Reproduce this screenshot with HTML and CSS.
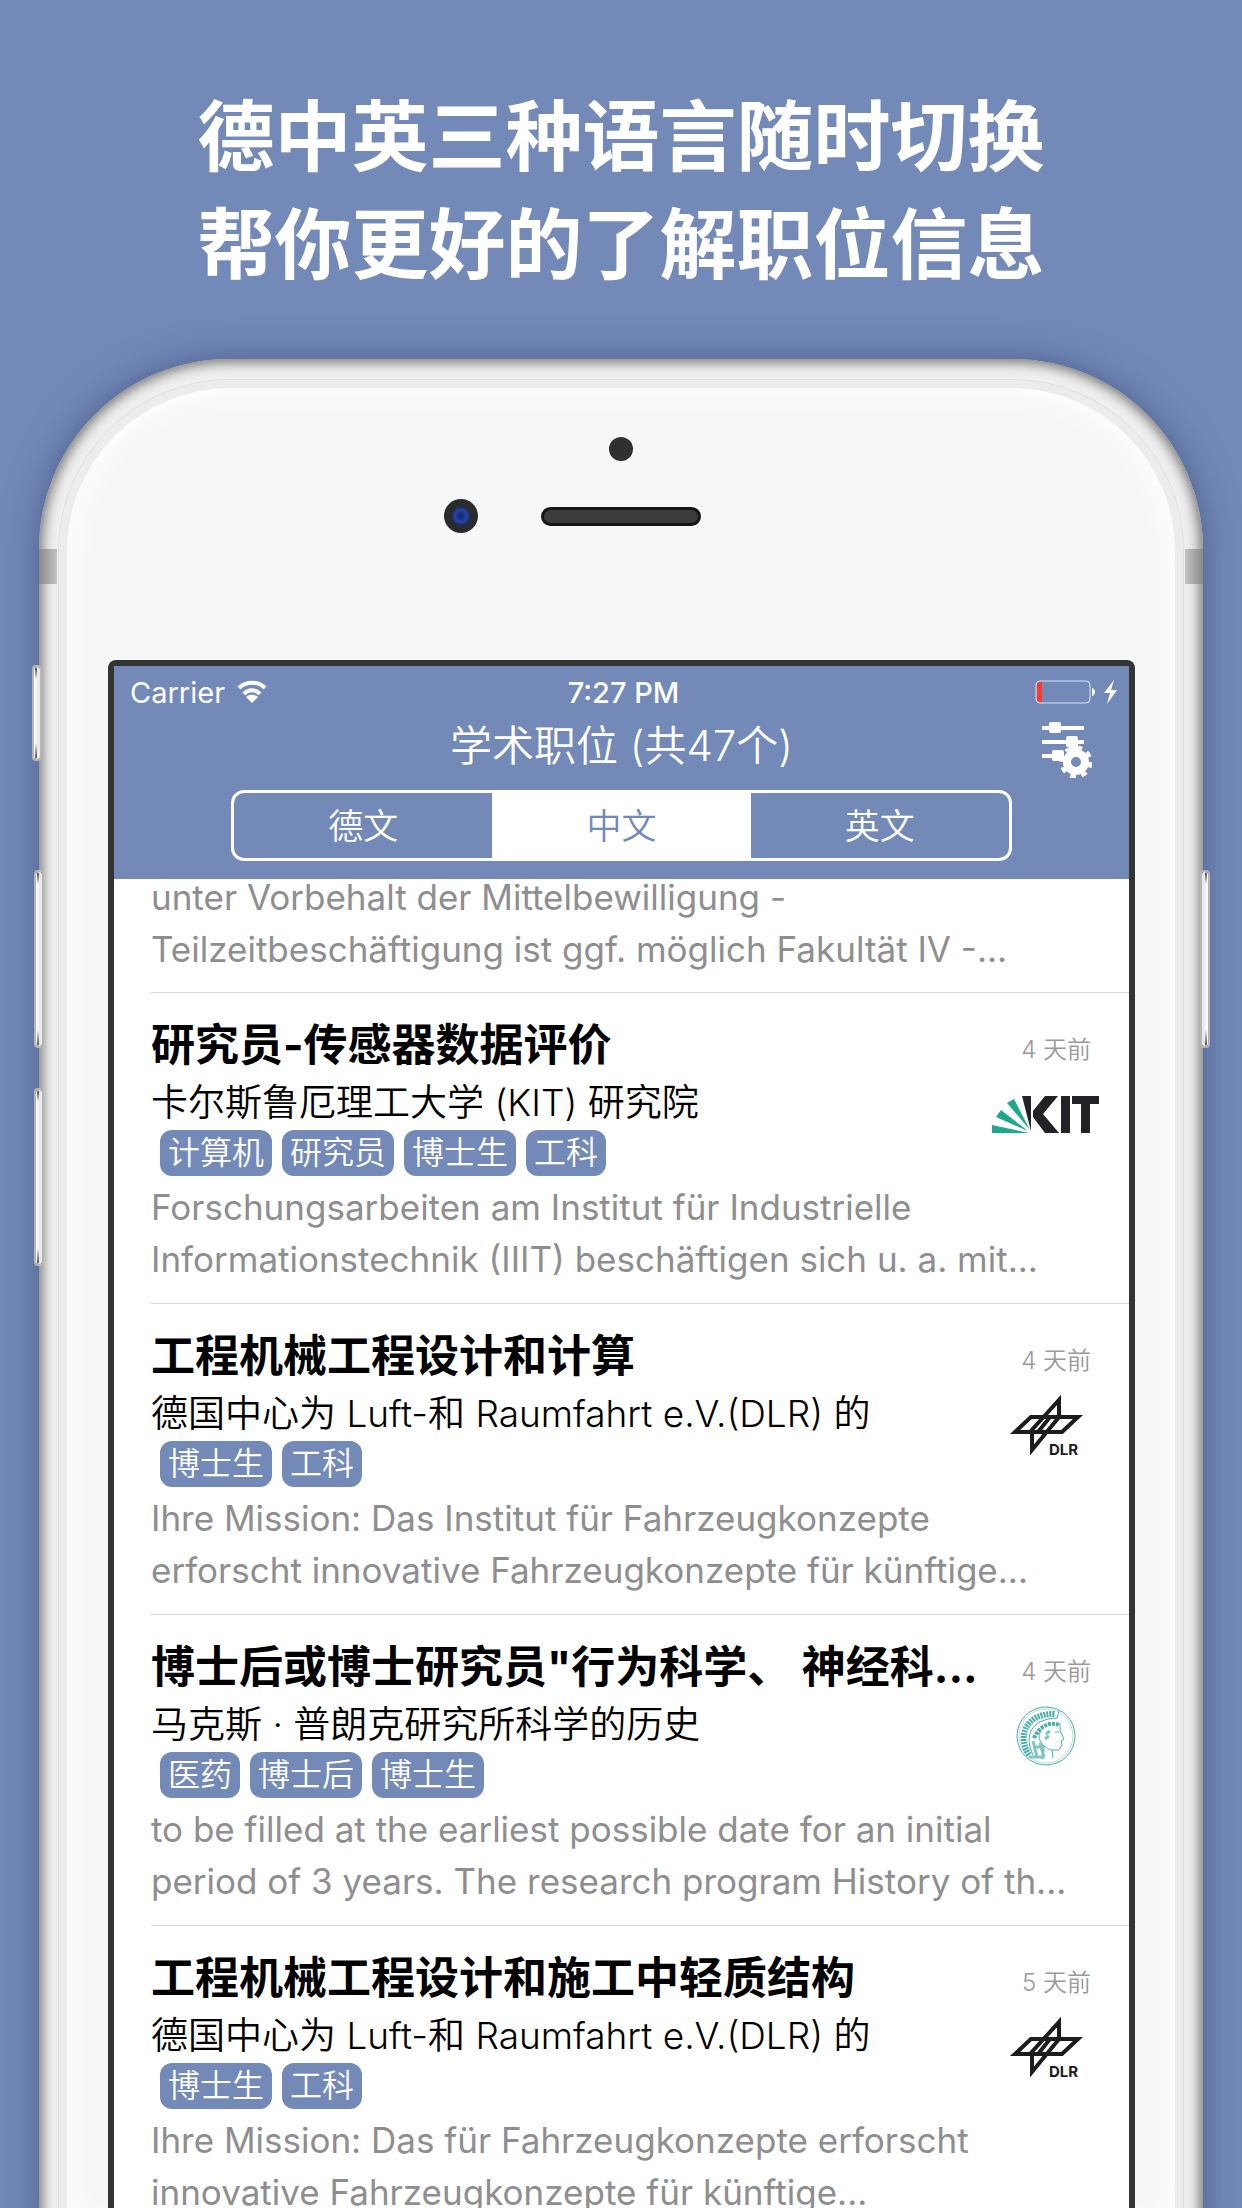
FILE: index.html
```html
<!DOCTYPE html>
<html lang="zh-CN">
<head>
<meta charset="utf-8">
<meta name="viewport" content="width=device-width, initial-scale=1">
<title>学术职位</title>
<link rel="stylesheet" href="styles.css">
</head>
<body>
<main class="poster">
  <h1 class="headline">德中英三种语言随时切换<br>帮你更好的了解职位信息</h1>
  <div class="phone">
    <span class="key key-mute"></span>
    <span class="key key-up"></span>
    <span class="key key-down"></span>
    <span class="key key-power"></span>
    <span class="band"></span>
    <div class="glass">
      <div class="sensors">
        <span class="proximity"></span>
        <span class="camera"></span>
        <span class="speaker"></span>
      </div>
      <div class="screen">
        <header class="top">
          <div class="status">
            <div class="carrier">Carrier
              <svg width="30" height="24" viewBox="0 0 30 24" fill="none" stroke="#fff" stroke-width="4"><path d="M2 8 C9 1 21 1 28 8"/><path d="M7 14 C11 9 19 9 23 14"/><path d="M15 23 L9 17 C12 14 18 14 21 17 Z" fill="#fff" stroke="none"/></svg>
            </div>
            <div class="time">7:27 PM</div>
            <div class="power">
              <svg width="82" height="24" viewBox="0 0 82 24"><rect x="1" y="1" width="54" height="22" rx="4" fill="none" stroke="#dde5f5" stroke-width="1"/><path d="M5 2 H7 V22 H5 Q2 22 2 19 V5 Q2 2 5 2Z" fill="#ff3b30"/><path d="M57 8 Q60 9 60 12 Q60 15 57 16Z" fill="#fff"/><path d="M79 0 L69 13 H75 L72 24 L82 10 H76 Z" fill="#fff"/></svg>
            </div>
          </div>
          <div class="nav">
            <h2 class="nav-title">学术职位 (共47个)</h2>
            <button class="filter" type="button" aria-label="筛选">
              <svg width="50" height="56" viewBox="0 0 50 56" fill="#fff"><path d="M0 4H42V8H0ZM0 18H42V22H0ZM0 32H14V36H0Z"/><rect x="7" y="0" width="12" height="11" rx="2"/><rect x="24" y="14" width="12" height="11" rx="2"/><rect x="10" y="28" width="12" height="11" rx="2"/><path d="M28 20 H35 V28 H28Z"/><circle cx="34" cy="40" r="9" fill="none" stroke="#fff" stroke-width="8"/><circle cx="34" cy="40" r="14" fill="none" stroke="#fff" stroke-width="5" stroke-dasharray="5.5 5.5"/></svg>
            </button>
          </div>
          <div class="segments" role="group" aria-label="语言">
            <button type="button" class="segment">德文</button>
            <button type="button" class="segment is-active" aria-pressed="true">中文</button>
            <button type="button" class="segment">英文</button>
          </div>
        </header>
        <section class="list">
          <article class="job job-first">
            <p class="desc">unter Vorbehalt der Mittelbewilligung -<br>Teilzeitbeschäftigung ist ggf. möglich Fakultät IV -...</p>
          </article>
          <article class="job">
            <div class="job-head"><h3 class="job-title">研究员-传感器数据评价</h3><time class="ago">4 天前</time></div>
            <p class="org">卡尔斯鲁厄理工大学 (KIT) 研究院</p>
            <div class="tags"><span class="tag">计算机</span><span class="tag">研究员</span><span class="tag">博士生</span><span class="tag">工科</span></div>
            <p class="desc">Forschungsarbeiten am Institut für Industrielle<br>Informationstechnik (IIIT) beschäftigen sich u. a. mit...</p>
            <svg class="logo" width="110" height="64" viewBox="0 0 110 64"><g fill="#1fa98c"><path d="M1 42 L1 50 H38Z"/><path d="M5 34 L10 27 L37 48Z"/><path d="M16 20 L23 16 L39 47Z"/></g><g fill="#222127"><path d="M31 13 H40 V48Z"/><path d="M54 13 H67 L52 31 L68 50 H54 L42 34 V28Z"/><path d="M70 13 H79 V50 H70ZM81 13 H108 V21 H99 V50 H90 V21 H81Z"/></g></svg>
          </article>
          <article class="job">
            <div class="job-head"><h3 class="job-title">工程机械工程设计和计算</h3><time class="ago">4 天前</time></div>
            <p class="org">德国中心为 Luft-和 Raumfahrt e.V.(DLR) 的</p>
            <div class="tags"><span class="tag">博士生</span><span class="tag">工科</span></div>
            <p class="desc">Ihre Mission: Das Institut für Fahrzeugkonzepte<br>erforscht innovative Fahrzeugkonzepte für künftige...</p>
            <svg class="logo" width="110" height="64" viewBox="-20 -4 110 64"><path d="M4 34 L20 19 H67 L51 34 Z M19 34 L48 2 V19 L21 52 V34 M27 34 L39 19" fill="none" stroke="#1c1c1e" stroke-width="4"/><text x="38" y="57" class="logo-text">DLR</text></svg>
          </article>
          <article class="job">
            <div class="job-head"><h3 class="job-title">博士后或博士研究员"行为科学、 神经科...</h3><time class="ago">4 天前</time></div>
            <p class="org">马克斯 · 普朗克研究所科学的历史</p>
            <div class="tags"><span class="tag">医药</span><span class="tag">博士后</span><span class="tag">博士生</span></div>
            <p class="desc">to be filled at the earliest possible date for an initial<br>period of 3 years. The research program History of th...</p>
            <svg class="logo" width="110" height="64" viewBox="-24 0 110 64" fill="none" stroke="#4aaea8"><circle cx="31" cy="31" r="29" stroke-width="1"/><circle cx="31" cy="31" r="27" stroke-width="1" opacity=".4"/><path d="M14 50 C2 32 10 8 40 9" stroke-width="6" stroke-dasharray="2 1"/><path d="M18 50 C9 32 15 14 42 13 L44 6" stroke-width="1"/><path d="M19 33 C24 22 34 16 44 20" stroke-width="4" stroke-dasharray="3 1"/><path d="M45 18 V26 L49 34 L46 36 L47 40 L44 45 H37 L38 53 M26 26 C20 34 30 44 37 45 M40 27 H44" stroke-width="1"/><path d="M31 29 L35 26 M30 34 L34 31 M18 36 L22 52 M14 52 H27 M25 38 L29 52 M28 40 V54 M19 42 H27" stroke-width="3" opacity=".7"/></svg>
          </article>
          <article class="job">
            <div class="job-head"><h3 class="job-title">工程机械工程设计和施工中轻质结构</h3><time class="ago">5 天前</time></div>
            <p class="org">德国中心为 Luft-和 Raumfahrt e.V.(DLR) 的</p>
            <div class="tags"><span class="tag">博士生</span><span class="tag">工科</span></div>
            <p class="desc">Ihre Mission: Das für Fahrzeugkonzepte erforscht<br>innovative Fahrzeugkonzepte für künftige...</p>
            <svg class="logo" width="110" height="64" viewBox="-20 -4 110 64"><path d="M4 34 L20 19 H67 L51 34 Z M19 34 L48 2 V19 L21 52 V34 M27 34 L39 19" fill="none" stroke="#1c1c1e" stroke-width="4"/><text x="38" y="57" class="logo-text">DLR</text></svg>
          </article>
        </section>
      </div>
    </div>
  </div>
</main>
</body>
</html>
```
FILE: styles.css
```css
* { box-sizing: border-box; }
body {
  margin: 0;
  background: #738ab8;
  font-family: Inter, "Noto Sans CJK SC", sans-serif;
}
h1, h2, h3, p { margin: 0; }
button {
  font: inherit;
  color: inherit;
  background: none;
  border: 0;
  padding: 0;
}
.poster {
  height: 100vh;
  overflow: hidden;
  display: flex;
  flex-direction: column;
}
.headline {
  flex: none;
  padding: 83px 0 60px;
  color: #fff;
  font-size: 77px;
  line-height: 108px;
  font-weight: 700;
  text-align: center;
}

/* device */
.phone {
  position: relative;
  flex: 1 0 auto;
  margin: 0 39px;
  padding: 20px 19px 0;
  border-radius: 190px 190px 0 0;
  background: #efefef;
  box-shadow: inset 0 0 12px 4px #7d7d7c, 0 0 36px rgba(60, 75, 125, .7);
}
.glass {
  position: relative;
  border-radius: 172px 172px 0 0;
  background: #f5f7f9;
  border: solid #dddfdf;
  border-width: 1px 1px 0;
  padding: 280px 48px 0 49px;
  box-shadow: inset 0 0 0 8px #ebeded, inset 0 0 34px 10px #fff;
}
.key {
  position: absolute;
  width: 10px;
  border-radius: 4px;
  border: 2px solid #b5b5b5;
  background: linear-gradient(#333, #f4f5f4 12px, #f4f5f4 calc(100% - 16px), #444);
  box-shadow: inset -3px 0 0 #e8e9e8, inset 1px 0 0 #fff;
}
.key-mute { left: -7px; top: 306px; height: 96px; }
.key-up { left: -5px; top: 511px; height: 178px; }
.key-down { left: -5px; top: 729px; height: 178px; }
.key-power { right: -7px; top: 511px; height: 178px; transform: scaleX(-1); }
.band {
  position: absolute;
  left: 0;
  right: 0;
  top: 190px;
  height: 35px;
  background: linear-gradient(90deg, #888, #c4c4c4 18px, transparent 18px, transparent calc(100% - 18px), #c4c4c4 calc(100% - 18px), #888);
}
.sensors { position: absolute; inset: 0 0 auto; height: 280px; }
.sensors span { position: absolute; border-radius: 50%; }
.proximity { left: calc(50% - 12px); top: 57px; width: 24px; height: 24px; background: #2f3031; }
.camera {
  left: calc(50% - 177px);
  top: 119px;
  width: 34px;
  height: 34px;
  background: radial-gradient(circle, #12236f 0, #2743a0 6px, #1c2d6c 9px, #2a2b2d 10px);
}
.sensors .speaker {
  left: calc(50% - 80px);
  top: 127px;
  width: 160px;
  height: 19px;
  border-radius: 10px;
  background: #3c3c3c;
  border: 3px solid #161616;
}

/* screen */
.screen {
  border: solid #333534;
  border-width: 6px 6px 0;
  border-radius: 8px 8px 0 0;
  background: #fff;
}
.top {
  background: #738ab8;
  color: #fff;
  padding: 8px 0 18px;
}
.status {
  display: grid;
  grid-template-columns: 1fr auto 1fr;
  align-items: center;
  height: 36px;
  padding: 0 12px 0 16px;
  font-size: 29px;
}
.carrier { display: flex; align-items: center; gap: 12px; }
.time { font-weight: 500; }
.power { display: flex; justify-content: flex-end; }
.nav {
  display: grid;
  grid-template-columns: 1fr auto 1fr;
  align-items: center;
  height: 80px;
}
.nav-title {
  grid-column: 2;
  padding-bottom: 8px;
  font-size: 42px;
  line-height: 60px;
  font-weight: 350;
}
.filter { justify-self: end; margin-right: 37px; }
.filter svg, .carrier svg, .power svg { display: block; }
.segments {
  display: grid;
  grid-template-columns: repeat(3, 1fr);
  margin: 0 117px;
  height: 71px;
  border: 3px solid #fff;
  border-radius: 13px;
  overflow: hidden;
}
.segment { padding-bottom: 4px; font-size: 35px; font-weight: 350; }
.segment.is-active { background: #fff; color: #738ab8; }

/* job list */
.list { overflow: hidden; }
.job {
  position: relative;
  margin-left: 37px;
  padding: 22px 38px 0 0;
  height: 311px;
  border-bottom: 1px solid #d9d9dc;
}
.job-first { height: 122px; margin-top: -8px; padding-top: 0; }
.job-head { display: flex; align-items: center; justify-content: space-between; gap: 16px; }
.job-title {
  min-width: 0;
  font-size: 44px;
  line-height: 60px;
  font-weight: 700;
  white-space: nowrap;
  overflow: hidden;
  text-overflow: ellipsis;
}
.ago { flex: none; font-size: 24px; color: #9a9a9c; font-weight: 350; padding-top: 4px; }
.org { font-size: 37px; line-height: 55px; color: #000; font-weight: 350; }
.tags { display: flex; gap: 10px; padding-left: 9px; }
.tag {
  padding: 0 8px;
  border-radius: 12px;
  background: #738ab8;
  color: #fff;
  font-size: 32px;
  line-height: 46px;
  font-weight: 350;
}
.desc {
  padding-top: 5px;
  font-size: 35px;
  line-height: 52px;
  color: #8e8e90;
  white-space: nowrap;
}
.job-first .desc { padding-top: 0; }
.logo { position: absolute; right: 28px; top: 90px; }
.logo-text { font: 700 15px Inter, sans-serif; fill: #1c1c1e; }
```
